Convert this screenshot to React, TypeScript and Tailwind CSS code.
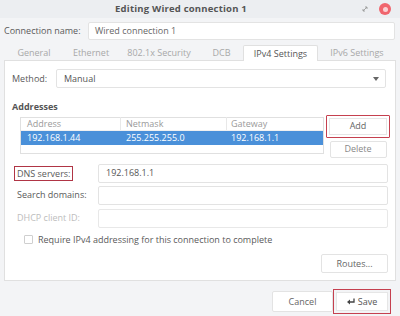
import React from "react";

const font = { fontFamily: '"Open Sans", "Noto Sans", sans-serif' };

export default function App() {
  return (
    <div
      className="w-[400px] h-[316px] bg-[#f3f4f6] text-[#5a5a5a] text-[9px] flex flex-col overflow-hidden relative"
      style={font}
    >
      {/* title bar */}
      <div className="h-[18px] flex items-center justify-center relative bg-[#eceef1] pr-[38px]">
        <span className="font-bold text-[9.5px] text-[#555] tracking-[0.2px]">Editing Wired connection 1</span>
        <svg className="absolute left-[362px] top-[6px]" width="6" height="6" viewBox="0 0 6 6">
          <path d="M1 5 L5 1 M3 1 H5 V3 M1 3 V5 H3" stroke="#9a9a9a" strokeWidth="0.9" fill="none" />
        </svg>
        <div className="absolute left-[379px] top-[3px] w-[12px] h-[12px] rounded-full bg-[#f0656d] flex items-center justify-center">
          <div className="w-[5px] h-[5px] rounded-full bg-[#fbd0d3]" />
        </div>
      </div>

      {/* connection name */}
      <div className="h-[24px] flex items-center pl-[4px] pr-[5px] mt-[1px]">
        <span className="w-[84px] shrink-0">Connection name:</span>
        <div className="flex-1 h-[18px] bg-white border border-[#e3e3e3] rounded-[2px] flex items-center px-[6px] text-[#666]">
          Wired connection 1
        </div>
      </div>

      {/* tabs */}
      <div className="h-[16px] mt-[1px] flex items-end pl-[4px] text-[#a8a8a8]">
        <div className="w-[60px] h-[15px] flex items-center justify-center">General</div>
        <div className="w-[54px] h-[15px] flex items-center justify-center">Ethernet</div>
        <div className="w-[82px] h-[15px] flex items-center justify-center">802.1x Security</div>
        <div className="w-[43px] h-[15px] flex items-center justify-center">DCB</div>
        <div className="w-[75px] h-[16px] flex items-center justify-center bg-white border border-b-0 border-[#e0e0e0] rounded-t-[2px] text-[#555] relative z-10 -mb-[1px]">
          IPv4 Settings
        </div>
        <div className="w-[78px] h-[15px] flex items-center justify-center">IPv6 Settings</div>
      </div>

      {/* panel */}
      <div className="mx-[4px] h-[221px] bg-white border border-[#e0e0e0] flex flex-col pl-[7px] pr-[9px]">
        <div className="mt-[8px] h-[19px] flex items-center">
          <span className="w-[44px] shrink-0">Method:</span>
          <div className="flex-1 h-[19px] border border-[#e3e3e3] rounded-[2px] flex items-center px-[7px] text-[#555] relative">
            Manual
            <svg className="absolute right-[6px] top-[7px]" width="6" height="4" viewBox="0 0 6 4">
              <path d="M0 0 H6 L3 4 Z" fill="#666" />
            </svg>
          </div>
        </div>

        <div className="mt-[12px] font-bold text-[#555]">Addresses</div>

        <div className="mt-[3px] flex -mr-[5px]">
          <div className="ml-[8px] w-[304px] shrink-0 h-[37px] border border-[#e0e0e0] flex flex-col">
            <div className="h-[13px] flex items-center text-[#9a9a9a] border-b border-[#f0f0f0]">
              <span className="w-[100px] pl-[6px] border-r border-[#e8e8e8]">Address</span>
              <span className="w-[106px] pl-[5px] border-r border-[#e8e8e8]">Netmask</span>
              <span className="pl-[4px]">Gateway</span>
            </div>
            <div className="h-[14px] flex items-center bg-[#4a90d9] text-white">
              <span className="w-[100px] pl-[6px]">192.168.1.44</span>
              <span className="w-[106px] pl-[5px]">255.255.255.0</span>
              <span className="pl-[4px]">192.168.1.1</span>
            </div>
          </div>
          <div className="ml-[2px] -mt-[2px] flex flex-col items-center w-[64px] shrink-0">
            <div className="w-[64px] h-[23px] border-[1.5px] border-[#c5404f] rounded-[1px] flex items-center justify-center p-[2px]">
              <div className="w-full h-full border border-[#e6e6e6] flex items-center justify-center text-[#666]">Add</div>
            </div>
            <div className="mt-[3px] w-[57px] h-[17px] border border-[#e3e3e3] rounded-[2px] flex items-center justify-center text-[#888]">
              Delete
            </div>
          </div>
        </div>

        <div className="mt-[6px] flex flex-col gap-[3px] ml-[5px] -mr-[2px]">
          <div className="h-[19px] flex items-center">
            <span className="w-[81px] shrink-0">
              <span className="inline-block border-[1.5px] border-[#b03545] px-[2px] py-[1px] -ml-[3px] leading-[11px]">DNS servers:</span>
            </span>
            <div className="flex-1 h-[19px] border border-[#e3e3e3] rounded-[2px] flex items-center px-[7px] text-[#555]">192.168.1.1</div>
          </div>
          <div className="h-[19px] flex items-center">
            <span className="w-[81px] shrink-0">Search domains:</span>
            <div className="flex-1 h-[19px] border border-[#e3e3e3] rounded-[2px]" />
          </div>
          <div className="h-[19px] flex items-center mt-[1px]">
            <span className="w-[81px] shrink-0 text-[#bdbdbd]">DHCP client ID:</span>
            <div className="flex-1 h-[19px] border border-[#e8e8e8] rounded-[2px]" />
          </div>
        </div>

        <div className="mt-[5px] ml-[12px] flex items-center">
          <div className="w-[9px] h-[9px] border border-[#cfcfcf] rounded-[1px]" />
          <span className="ml-[5px]">Require IPv4 addressing for this connection to complete</span>
        </div>

        <div className="mt-[8px] flex justify-end -mr-[2px]">
          <div className="w-[67px] h-[19px] border border-[#e3e3e3] rounded-[2px] flex items-center justify-center text-[#666]">Routes...</div>
        </div>
      </div>

      {/* bottom buttons */}
      <div className="mt-[8px] flex justify-end pr-[9px]">
        <div className="mt-[2px] w-[61px] h-[21px] border border-[#e3e3e3] bg-white rounded-[2px] flex items-center justify-center text-[#666]">Cancel</div>
        <div className="w-[58px] h-[25px] border-[1.5px] border-[#c5404f] flex items-center justify-center p-[2px]">
          <div className="w-full h-full border border-[#e6e6e6] bg-white flex items-center justify-center text-[#555]">
            <svg width="8" height="7" viewBox="0 0 8 7" className="mr-[3px]">
              <path d="M7 0.5 V4 H2" stroke="#444" strokeWidth="1.3" fill="none" />
              <path d="M0 4 L3 1.5 V6.5 Z" fill="#444" />
            </svg>
            Save
          </div>
        </div>
      </div>
    </div>
  );
}
